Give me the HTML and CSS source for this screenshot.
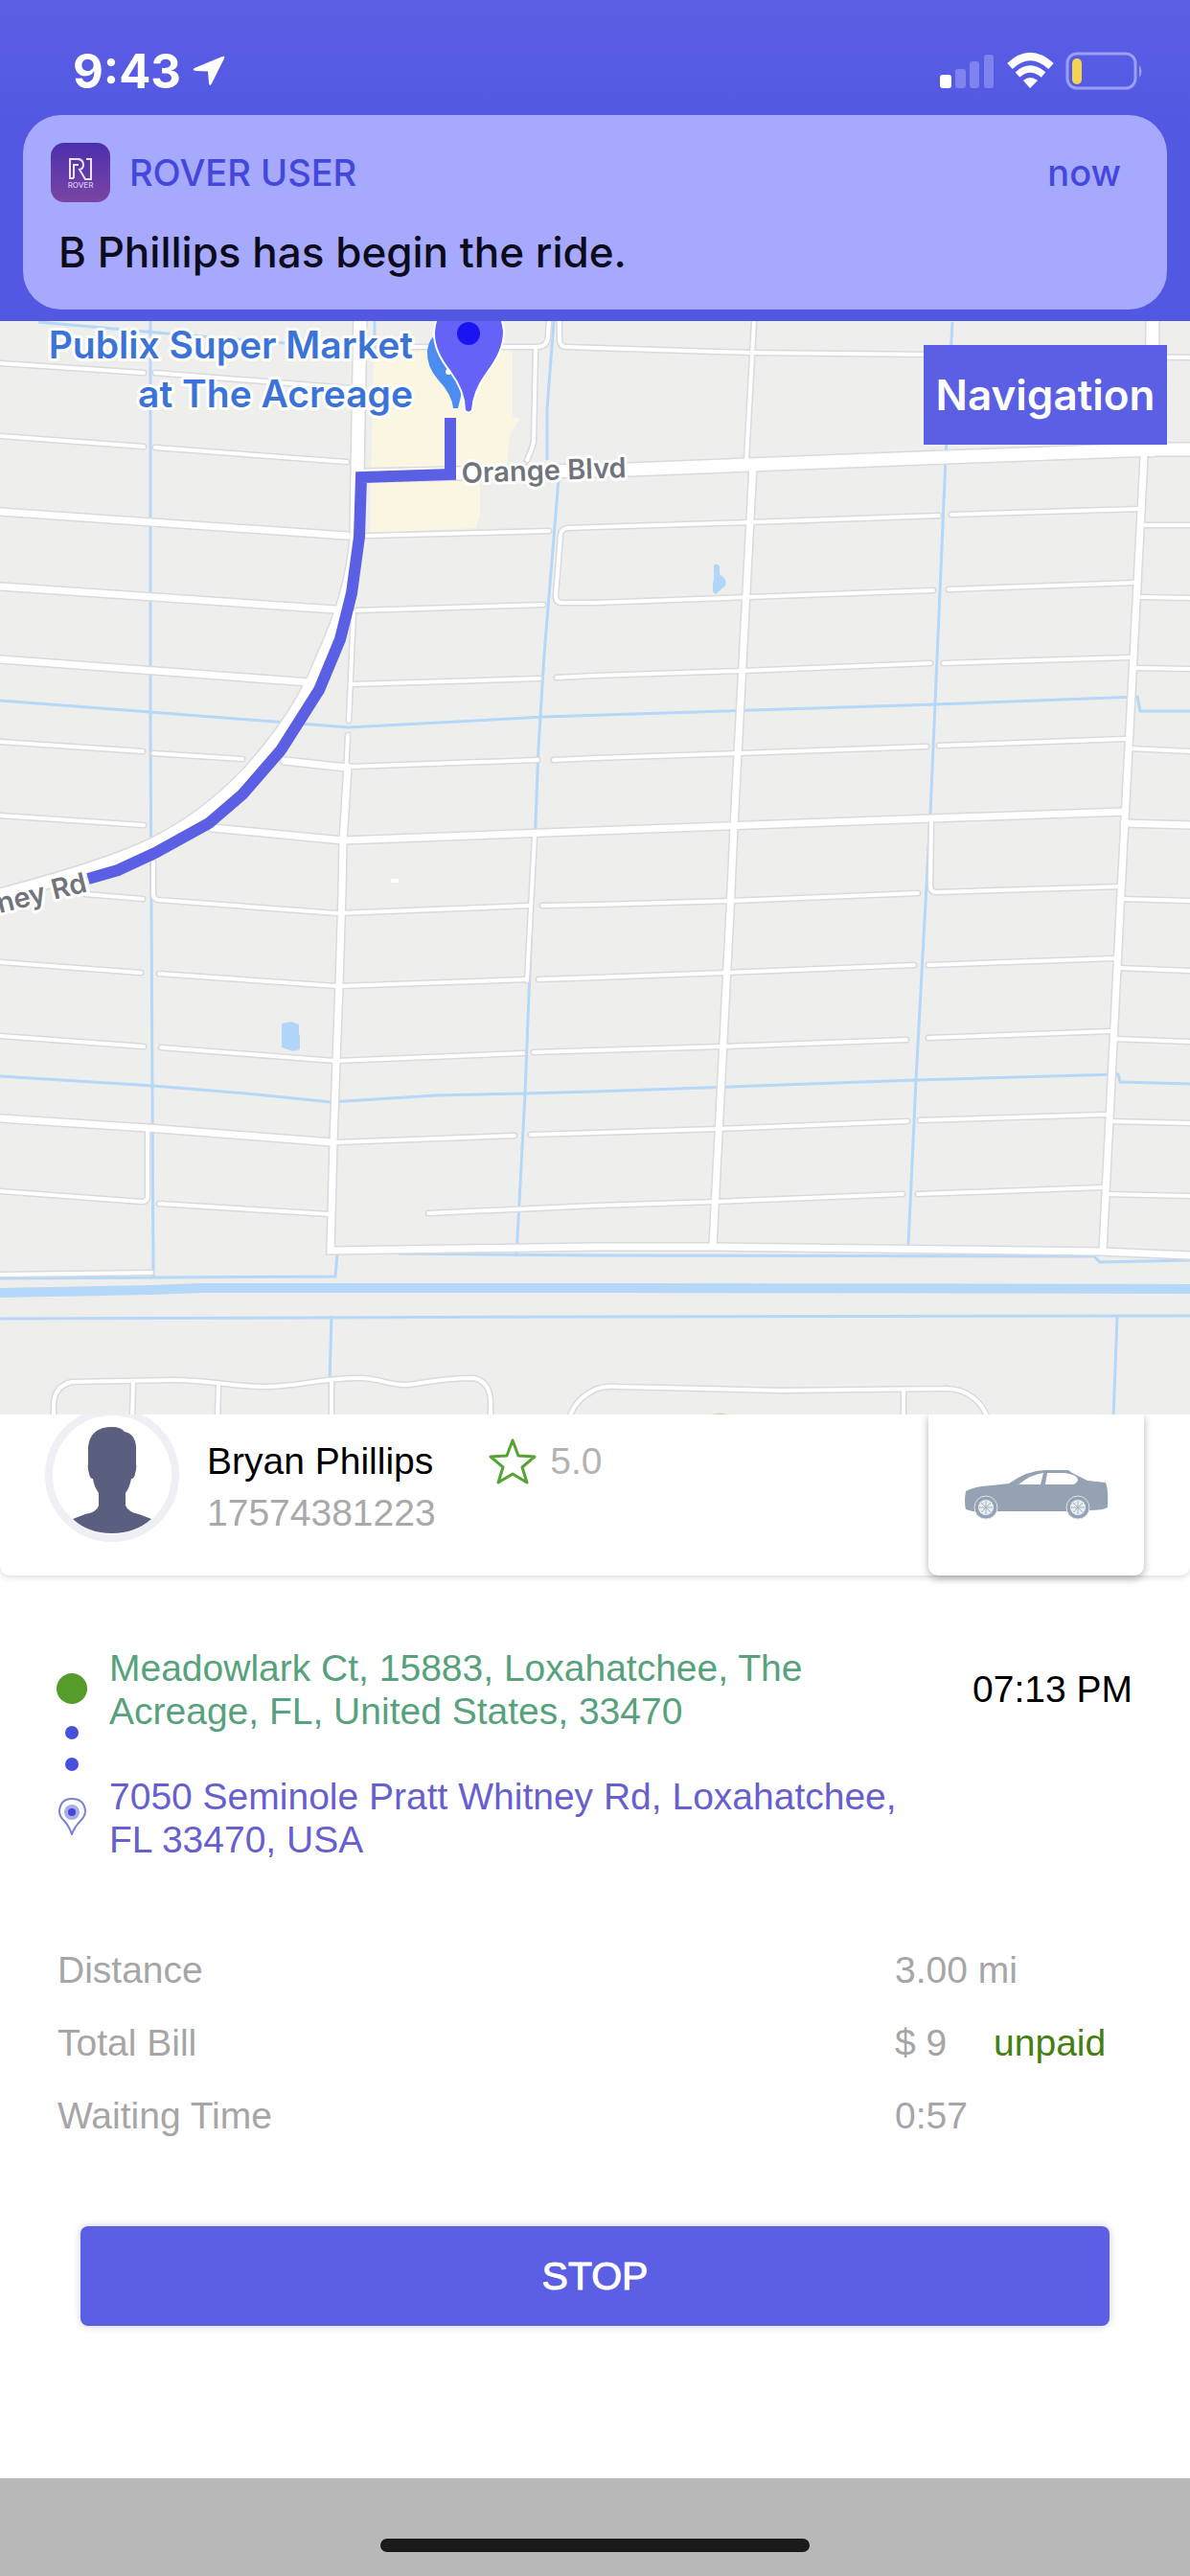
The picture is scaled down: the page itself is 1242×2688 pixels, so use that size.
FILE: index.html
```html
<!DOCTYPE html>
<html lang="en">
<head>
  <meta charset="UTF-8" />
  <title>Rover Driver</title>
  <meta name="viewport" content="width=device-width, initial-scale=1.0" />
  <link rel="stylesheet" href="styles.css">
</head>
<body>
  <header class="top">
    <div class="status-bar">
      <span class="clock">9:43</span>
      <svg class="location" width="34" height="32" viewBox="0 0 34 32" aria-hidden="true">
        <path d="M31 1 L2 13 Q-1 15 3 16 L16 16.500 L17 29 Q18 33 20 29 L33 3 Q34 0 31 1Z" fill="#fff"/>
      </svg>
      <svg class="signals" width="214" height="40" viewBox="978 54 214 40" aria-hidden="true">
        <rect x="979" y="78" width="12" height="14" rx="3" fill="#fff"/>
        <g fill="#7f83ee">
          <rect x="995" y="72" width="11" height="20" rx="3"/>
          <rect x="1010" y="64" width="10" height="28" rx="3"/>
          <rect x="1025" y="57" width="10" height="35" rx="3"/>
        </g>
        <path d="M1052 69 Q1073 49 1095 69" fill="none" stroke="#fff" stroke-width="8"/>
        <path d="M1060 78 Q1073 66 1087 78" fill="none" stroke="#fff" stroke-width="7"/>
        <path d="M1066 84 Q1073 78 1081 84 L1073 92Z" fill="#fff"/>
        <rect x="1112" y="56" width="71" height="36" rx="10" fill="none" stroke="#9b9ef5" stroke-width="3"/>
        <rect x="1117" y="61" width="10" height="27" rx="5" fill="#f3d34f"/>
        <path d="M1187 68 Q1192 74 1187 81Z" fill="#9b9ef5"/>
      </svg>
    </div>

    <div class="notification">
      <div class="notification-head">
        <svg class="app-icon" width="62" height="62" viewBox="0 0 62 62" aria-hidden="true">
          <defs>
            <linearGradient id="appBg" x1="0" y1="0" x2="0" y2="1">
              <stop offset="0" stop-color="#4c2fae"/>
              <stop offset="1" stop-color="#7a45a3"/>
            </linearGradient>
          </defs>
          <rect width="62" height="62" rx="14" fill="url(#appBg)"/>
          <path d="M24 37 H20 V17 H29 Q34 18 34 23 Q34 27 30 28 L36 38 H42 V17 H37 M24 37 V23 H29" fill="none" stroke="#ece4fa" stroke-width="2"/>
          <text x="31" y="47" class="app-word">ROVER</text>
        </svg>
        <span class="app-name">ROVER USER</span>
        <span class="when">now</span>
      </div>
      <p class="message">B Phillips has begin the ride.</p>
    </div>
  </header>

  <section class="map">
    <svg class="map-canvas" viewBox="0 335 1242 1141" role="img" aria-label="Route map">
      <defs>
        <g id="minor">
          <path d="M0 379 L150 389 M162 389 L365 405 M0 455 L150 466 M162 467 L362 482"/>
          <path d="M0 774 L149 784 M160 786 L253 792 M0 851 L150 861 M89 933 L149 938"/>
          <path d="M160 900 L160 932 Q160 938 165 939 L352 953 L552 945 M566 945 L621 944 L763 940 L958 932"/>
          <path d="M558 872 L554 948 L550 1023"/>
          <path d="M428 362 L560 362 Q572 362 572 350 L573 335 M584 335 V354 Q584 362 592 362 L621 363 L783 368 L1242 373"/>
          <path d="M559 364 L557 461 Q555 470 550 480"/>
          <path d="M787 335 L779 480"/>
          <path d="M383 559 L573 554 M372 637 L567 631 M368 714 L563 708 M364 800 L561 793"/>
          <path d="M980 538 L783 545 L621 550 L592 551 Q586 552 585 558 L580 622 Q580 629 587 629 L621 629 L781 623 L974 616"/>
          <path d="M993 537 L1189 531 M990 615 L1185 608 M985 692 L1179 686 M980 778 L1175 771"/>
          <path d="M581 707 L621 705 L775 700 L971 692 M578 793 L621 791 L771 786 L967 779"/>
          <path d="M1195 548 H1242 M1191 623 L1242 624 M1185 697 L1242 698 M1179 781 L1242 784 M1171 938 L1242 940"/>
          <path d="M972 857 L971 924 Q971 931 977 931 L1170 925"/>
          <path d="M369 639 L364 752 M363 767 L358 877"/>
          <path d="M0 1004 L147 1015 M166 1016 L352 1029 L549 1022 M562 1022 L621 1020 L758 1015 L954 1007 M969 1007 L1163 1000 M1168 1010 L1242 1013"/>
          <path d="M0 1081 L150 1092 M168 1093 L350 1107 L546 1099 M557 1098 L621 1096 L754 1092 L946 1085 M969 1083 L1160 1076 M1163 1084 L1242 1087"/>
          <path d="M352 1192 L537 1185 M554 1184 L621 1182 L748 1178 L947 1170 M960 1169 L1154 1163 M1158 1170 L1242 1172"/>
          <path d="M0 1243 L148 1254 Q154 1254 154 1248 V1180 M166 1256 L345 1267"/>
          <path d="M447 1266 L621 1258 L746 1254 L942 1246 M958 1246 L1150 1239 M1154 1246 L1242 1248 M0 1330 L158 1328"/>
          <path d="M56 1480 V1465 Q57 1446 75 1442 L182 1440 C220 1440 240 1447 277 1447 S330 1438 376 1438 C395 1438 405 1445 422 1445 S450 1438 495 1438 Q511 1442 512 1462 V1480"/>
          <path d="M139 1442 L138 1480 M228 1446 L227 1480 M346 1442 V1480 M943 1451 V1480"/>
          <path d="M594 1480 Q600 1460 621 1450 Q630 1446 645 1447 L815 1451 L985 1449 C1012 1448 1026 1466 1031 1480"/>
        </g>
        <g id="mid">
          <path d="M0 534 L362 559 M0 612 L350 636 M0 688 L323 712"/>
          <path d="M222 864 L358 877 L621 867 L971 854 L1173 847 M1173 859 L1242 861 M297 794 L362 801"/>
          <path d="M363 800 L358 877 L357 930 L354 1028 L351 1107 L348 1192 L345 1305 L621 1301 L744 1301 L1150 1306 L1242 1310"/>
          <path d="M786 485 L766 863 L762 950 L744 1300 M1194 477 L1169 950 L1151 1305"/>
          <path d="M0 1167 L154 1177 L347 1192"/>
        </g>
        <g id="major">
          <path d="M376 325 L373 496 L372 560 Q368 620 337 686 Q315 745 261 805 Q214 855 158 882 Q110 905 0 934" class="pratt"/>
          <path d="M383 496 L657 490 L987 477 L1202 469 L1242 469 M1203 335 L1202 470"/>
        </g>
      </defs>

      <rect x="0" y="335" width="1242" height="1141" fill="#eeeeec"/>
      <path d="M390 364 H535 V435 L543 437 Q531 452 531 465 L529 490 L501 504 V536 L497 551 L386 556Z" fill="#fbf6e1"/>

      <!-- canals and ponds -->
      <g class="water">
        <path d="M40 336 L174 348 L297 358 M391 335 V365"/>
        <path d="M157 335 V760 L160 1332"/>
        <path d="M578 335 L571 427 V480 M583 500 L568 683 L562 780 L548 1141 L539 1311"/>
        <path d="M994 336 L987 478 L971 849 L956 1127 L948 1300"/>
        <path d="M0 731 L157 743 L364 759 L568 748 L976 735 L1187 727 L1190 742 H1242"/>
        <path d="M0 1123 L160 1133 L257 1141 L345 1150 L455 1143 L548 1141 L621 1139 L956 1127 L1167 1121 L1169 1129 L1242 1131"/>
        <path d="M0 1334 L350 1332 L352 1308 M416 1308 L621 1310 L1142 1311 L1148 1317 L1242 1315"/>
        <path d="M0 1376 L621 1374 L1242 1373 M346 1373 L344 1440 M1166 1374 L1162 1480"/>
        <path d="M0 1349 L158 1346 L210 1344 H650 L1242 1345" class="canal"/>
      </g>
      <path d="M745 590 Q748 587 751 591 V599 Q760 605 757 611 L747 620 L744 618 V609 L745 605Z" fill="#b2d6fa"/>
      <path d="M294 1068 L304 1066 L312 1069 V1079 L313 1080 V1095 L306 1097 L294 1093Z" fill="#b2d6fa"/>

      <!-- roads: grey casing first, white fill above -->
      <g class="casing">
        <use href="#minor" stroke-width="7"/>
        <use href="#mid" stroke-width="10"/>
        <use href="#major" stroke-width="16"/>
      </g>
      <g class="fill">
        <use href="#minor" stroke-width="4"/>
        <use href="#mid" stroke-width="7"/>
        <use href="#major" stroke-width="13"/>
      </g>
      <rect x="408" y="917" width="8" height="4" fill="#fff"/>
      <path d="M738 1479 Q751 1472 765 1479" fill="#fff" stroke="#b9e3b0" stroke-width="2"/>

      <path d="M470 436 V495 L377 498 L375 560 L367 619 L355 667 L333 720 L293 783 L253 829 L218 859 L162 890 L123 908 L92 917" class="route-line"/>

      <!-- pins -->
      <path d="M473 426 Q472 412 457 396 Q445 382 446 366 Q448 350 462 345 L489 380 L478 426Z" fill="#4a8cf0"/>
      <circle cx="468" cy="388" r="3" fill="#fff"/>
      <path d="M485 428 Q485 408 470 388 Q452 366 453 346 Q456 312 489 311 Q523 312 526 346 Q526 366 509 388 Q494 408 493 428 Q489 433 485 428Z" fill="#6562f7" stroke="#fff" stroke-width="2"/>
      <circle cx="489" cy="348" r="12" fill="#1a14f2"/>

      <g class="place">
        <text x="431" y="374">Publix Super Market</text>
        <text x="431" y="425">at The Acreage</text>
      </g>
      <text x="482" y="504" class="street" transform="rotate(-2 482 504)">Orange Blvd</text>
      <text x="92" y="930" class="street street-end" transform="rotate(-14 92 930)">ney Rd</text>
    </svg>
    <button class="nav-btn" type="button">Navigation</button>
  </section>

  <main>
    <section class="driver">
      <svg class="avatar" width="142" height="134" viewBox="46 1476 142 134" role="img" aria-label="Driver photo">
        <circle cx="117" cy="1539" r="66" fill="#fff" stroke="#efeff6" stroke-width="8"/>
        <path d="M92 1528 V1510 Q94 1489 117 1489 Q126 1489 130 1494 Q141 1496 142 1510 V1528 Q143 1530 141 1538 Q140 1543 137 1543 Q135 1553 131 1558 V1571 Q134 1578 145 1580 L158 1585 Q141 1600 117 1600 Q92 1600 76 1585 L89 1580 Q101 1578 103 1571 V1558 Q98 1551 97 1543 Q94 1543 93 1538 Q91 1530 92 1528Z" fill="#5a5f80"/>
      </svg>
      <div class="driver-info">
        <div class="driver-line">
          <span class="driver-name">Bryan Phillips</span>
          <span class="rating">
            <svg width="50" height="48" viewBox="0 0 50 48" aria-hidden="true">
              <path d="M25 2 L31 18 L48 19 L35 30 L40 46 L25 37 L10 46 L15 30 L2 19 L19 18Z" fill="none" stroke="#55a433" stroke-width="3" stroke-linejoin="round"/>
            </svg>
            5.0
          </span>
        </div>
        <div class="phone">17574381223</div>
      </div>
      <div class="car-card">
        <svg width="150" height="52" viewBox="0 0 150 52" role="img" aria-label="Sedan">
          <path d="M1 41 Q-1 34 1 22 Q10 17 28 16 L46 14 Q66 0 84 0 H108 L112 3 L128 11 L147 13 Q150 20 149 39 Q144 42 130 42 L105 43 H34 L8 43Z" fill="#94a2b3"/>
          <path d="M56 15 Q70 4 82 3 L79 15Z M86 3 H104 Q118 5 118 10 Q117 14 113 15 H84Z" fill="#fff"/>
          <g fill="#94a2b3" stroke="#dfe4ea">
            <circle cx="22" cy="39" r="12"/>
            <circle cx="118" cy="39" r="12"/>
          </g>
          <g fill="#e9edf2">
            <circle cx="22" cy="39" r="8"/>
            <circle cx="118" cy="39" r="8"/>
          </g>
          <path d="M22 32 V46 M15 39 H29 M17 34 L27 44 M27 34 L17 44 M118 32 V46 M111 39 H125 M113 34 L123 44 M123 34 L113 44" stroke="#a3afbd" stroke-width="1"/>
        </svg>
      </div>
    </section>

    <section class="trip">
      <svg class="rail" width="33" height="170" viewBox="0 0 33 170" aria-hidden="true">
        <circle cx="16" cy="17" r="16" fill="#569c2b"/>
        <circle cx="16" cy="63" r="7" fill="#4750dc"/>
        <circle cx="16" cy="96" r="7" fill="#4750dc"/>
        <path d="M16 169 Q13 160 7 154 Q3 150 3 145 Q4 132 16 132 Q29 132 30 145 Q30 150 25 155 Q19 161 16 169Z" fill="#fff" stroke="#7b80d8" stroke-width="2"/>
        <circle cx="16" cy="146" r="8" fill="#a9acec"/>
        <circle cx="16" cy="146" r="4" fill="#4048d8"/>
      </svg>
      <address class="stop-text pickup">Meadowlark Ct, 15883, Loxahatchee, The Acreage, FL, United States, 33470</address>
      <time class="trip-time">07:13 PM</time>
      <address class="stop-text dropoff">7050 Seminole Pratt Whitney Rd, Loxahatchee, FL 33470, USA</address>
    </section>

    <dl class="details">
      <dt>Distance</dt>
      <dd>3.00 mi</dd>
      <dt>Total Bill</dt>
      <dd>$ 9 <span class="unpaid">unpaid</span></dd>
      <dt>Waiting Time</dt>
      <dd>0:57</dd>
    </dl>

    <button class="stop-btn" type="button">STOP</button>
  </main>

  <footer class="home-area">
    <div class="home-bar"></div>
  </footer>
</body>
</html>
```
FILE: styles.css
```css
* {
  box-sizing: border-box;
}

body {
  margin: 0;
  min-height: 100vh;
  display: flex;
  flex-direction: column;
  font-family: 'Liberation Sans', Arial, sans-serif;
  font-size: 39px;
  background: #fff;
}

button {
  border: none;
  padding: 0;
  color: #fff;
  background: #5a5fe3;
  cursor: pointer;
}

/* status bar + notification */
.top {
  padding: 0 24px 12px;
  background: linear-gradient(#5b5fe5, #5358e2 40%, #5358e2);
  font-family: Inter, sans-serif;
}

.status-bar {
  display: flex;
  align-items: center;
  height: 120px;
  padding: 28px 24px 0 52px;
}

.clock {
  color: #fff;
  font-size: 49px;
  font-weight: 700;
}

.location {
  margin-left: 12px;
}

.signals {
  margin-left: auto;
}

.notification {
  height: 203px;
  padding: 29px 48px 0 29px;
  border-radius: 40px;
  background: #a6a9fe;
}

.notification-head {
  display: flex;
  align-items: center;
  font-size: 38px;
  font-weight: 500;
  color: #4447dc;
}

.app-name {
  margin-left: 20px;
}

.app-word {
  font-size: 8px;
  text-anchor: middle;
  fill: #d8c8f0;
}

.when {
  margin-left: auto;
}

.message {
  margin: 22px 8px 0;
  font-size: 44px;
  font-weight: 500;
  line-height: 60px;
  color: #0b0b1c;
}

/* map */
.map {
  position: relative;
}

.map-canvas {
  display: block;
  width: 100%;
  height: auto;
}

.water {
  fill: none;
  stroke: #b5d7f8;
  stroke-width: 3px;
}

.canal {
  stroke-width: 10px;
}

.casing {
  fill: none;
  stroke: #dadade;
  stroke-linecap: round;
}

.fill {
  fill: none;
  stroke: #fff;
  stroke-linecap: round;
}

.casing .pratt {
  stroke-width: 22px;
}

.fill .pratt {
  stroke-width: 19px;
}

.route-line {
  fill: none;
  stroke: #5a5fe3;
  stroke-width: 12px;
}

.place,
.street {
  font-family: Inter, sans-serif;
  font-weight: 600;
  stroke: #fff;
  stroke-width: 6px;
  stroke-linejoin: round;
  paint-order: stroke;
}

.place {
  font-size: 39px;
  text-anchor: end;
  fill: #3b74d6;
}

.street {
  font-size: 29px;
  fill: #71757b;
}

.street-end {
  text-anchor: end;
}

.nav-btn {
  position: absolute;
  top: 25px;
  right: 24px;
  width: 254px;
  height: 104px;
  font-family: Inter, sans-serif;
  font-size: 44px;
  font-weight: 600;
}

/* driver */
.driver {
  display: flex;
  height: 168px;
  padding: 0 48px 0 46px;
  border-radius: 0 0 10px 10px;
  box-shadow: 0 2px 6px rgba(0, 0, 0, 0.14);
}

.driver-info {
  margin-left: 28px;
  padding-top: 22px;
}

.driver-line {
  display: flex;
  align-items: center;
  gap: 58px;
  height: 54px;
}

.rating {
  display: flex;
  align-items: center;
  gap: 14px;
  color: #b3b3b3;
}

.phone {
  line-height: 54px;
  color: #a9a9a9;
}

.car-card {
  display: flex;
  justify-content: center;
  align-items: center;
  width: 225px;
  margin-left: auto;
  border-radius: 0 0 10px 10px;
  background: #fff;
  box-shadow: 0 3px 8px rgba(0, 0, 0, 0.3);
  clip-path: inset(0 -12px -14px);
}

/* addresses */
.trip {
  display: grid;
  grid-template-columns: 33px 1fr auto;
  gap: 44px 22px;
  align-items: center;
  padding: 74px 60px 0 59px;
}

.rail {
  grid-row: span 2;
}

.stop-text {
  max-width: 830px;
  font-style: normal;
  line-height: 45px;
}

.pickup {
  color: #57a27c;
}

.dropoff {
  color: #675fcf;
}

.trip-time {
  color: #000;
}

/* bill */
.details {
  display: grid;
  grid-template-columns: 1fr 248px;
  margin: 0;
  padding: 76px 60px 0;
  line-height: 76px;
  color: #a6a6a6;
}

.details dd {
  margin: 0;
}

.unpaid {
  margin-left: 38px;
  color: #437f12;
}

.stop-btn {
  display: block;
  width: calc(100% - 168px);
  height: 104px;
  margin: 77px 84px 60px;
  border-radius: 8px;
  box-shadow: 0 0 8px rgba(0, 0, 0, 0.2);
  font-family: inherit;
  font-size: 41px;
  -webkit-text-stroke: 1px #fff;
}

.home-area {
  display: flex;
  justify-content: center;
  align-items: flex-end;
  height: 102px;
  margin-top: auto;
  padding-bottom: 25px;
  background: #b8b8b8;
}

.home-bar {
  width: 36%;
  height: 14px;
  border-radius: 7px;
  background: #1a1a1a;
}
```
